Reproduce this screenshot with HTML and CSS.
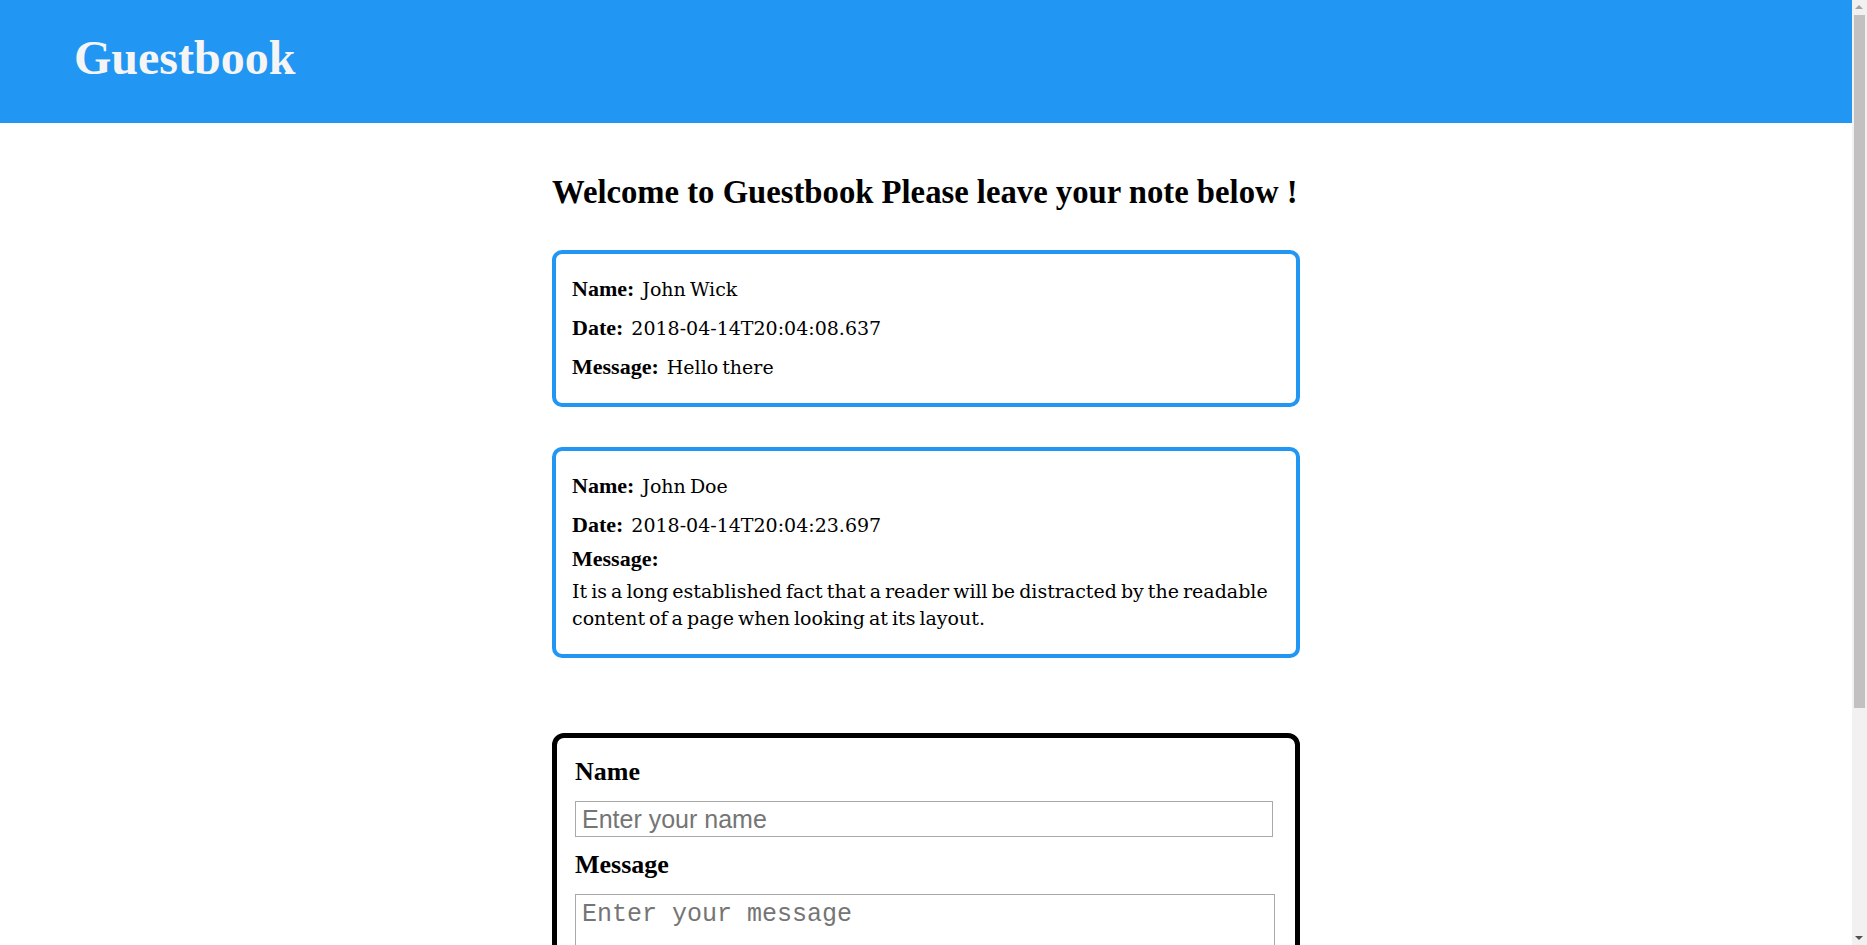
FILE: index.html
```html
<!DOCTYPE html>
<html lang="en">
<head>
<meta charset="utf-8">
<title>Guestbook</title>
<link rel="stylesheet" href="styles.css">
</head>
<body>
<header class="topbar">
  <h1 class="brand">Guestbook</h1>
</header>
<main class="container">
  <h2 class="welcome">Welcome to Guestbook Please leave your note below !</h2>
  <section class="notes">
    <article class="note">
      <div class="row"><span class="label">Name:</span><p class="value">John Wick</p></div>
      <div class="row"><span class="label">Date:</span><p class="value">2018-04-14T20:04:08.637</p></div>
      <div class="row"><span class="label">Message:</span><p class="value">Hello there</p></div>
    </article>
    <article class="note">
      <div class="row"><span class="label">Name:</span><p class="value">John Doe</p></div>
      <div class="row"><span class="label">Date:</span><p class="value">2018-04-14T20:04:23.697</p></div>
      <div class="row"><span class="label">Message:</span><p class="value">It is a long established fact that a reader will be distracted by the readable content of a page when looking at its layout.</p></div>
    </article>
  </section>
  <form class="entry-form">
    <label class="field-label" for="name">Name</label>
    <input class="field-input" id="name" type="text" placeholder="Enter your name">
    <label class="field-label" for="message">Message</label>
    <textarea class="field-area" id="message" placeholder="Enter your message"></textarea>
    <button class="submit" type="submit">Submit</button>
  </form>
</main>
<div class="scrollbar" aria-hidden="true">
  <span class="sb-arrow sb-up"></span>
  <span class="sb-thumb"></span>
  <span class="sb-arrow sb-down"></span>
</div>
</body>
</html>
```

FILE: styles.css
```css
html, body {
  margin: 0;
  padding: 0;
  background: #ffffff;
  color: #000000;
}

body {
  font-family: "DejaVu Serif", serif;
  padding-right: 15px;
}

.topbar {
  background: #2196f3;
  height: 123px;
  box-sizing: border-box;
  padding: 30px 0 0 74px;
}

.brand {
  margin: 0;
  font-family: "Liberation Serif", serif;
  font-weight: bold;
  font-size: 48px;
  line-height: 56px;
  color: #f5f5f5;
}

.container {
  width: 748px;
  margin: 0 auto;
  padding-bottom: 74px;
}

.welcome {
  margin: 51px 0 40px;
  font-family: "Liberation Serif", serif;
  font-weight: bold;
  font-size: 32.7px;
  line-height: 36px;
  white-space: nowrap;
}

.notes {
  display: flex;
  flex-direction: column;
  gap: 40px;
}

.note {
  border: 4px solid #2196f3;
  border-radius: 10px;
  padding: 16px;
}

.row {
  display: flex;
  flex-wrap: wrap;
  align-items: baseline;
  column-gap: 8px;
  line-height: 27px;
}

.label {
  font-family: "Liberation Serif", serif;
  font-weight: bold;
  font-size: 22px;
}

.value {
  margin: 6px 0;
  font-family: "DejaVu Serif", serif;
  font-size: 19px;
  word-spacing: -2px;
}

.entry-form {
  margin-top: 75px;
  border: 5px solid #000000;
  border-radius: 12px;
  padding: 19px 20px 20px 18px;
  display: flex;
  flex-direction: column;
  align-items: flex-start;
}

.field-label {
  font-family: "Liberation Serif", serif;
  font-weight: bold;
  font-size: 26px;
  line-height: 30px;
  margin-bottom: 14px;
}

.field-input {
  box-sizing: border-box;
  width: 698px;
  height: 36px;
  margin: 0 0 13px;
  padding: 0 6px;
  border: 1px solid #a9a9a9;
  font-family: "Liberation Sans", sans-serif;
  font-size: 25px;
  color: #000;
}

.field-input::placeholder {
  color: #757575;
}

.field-area {
  box-sizing: border-box;
  width: 700px;
  height: 200px;
  margin: 0 0 14px;
  padding: 5px 6px;
  border: 1px solid #a9a9a9;
  font-family: "Liberation Mono", monospace;
  font-size: 25px;
  resize: vertical;
}

.field-area::placeholder {
  color: #757575;
}

.submit {
  height: 40px;
  padding: 0 20px;
  font-family: "Liberation Serif", serif;
  font-size: 20px;
  background: #2196f3;
  color: #fff;
  border: none;
  border-radius: 4px;
}

/* decorative replica of the page scrollbar seen in the reference */
.scrollbar {
  position: fixed;
  top: 0;
  right: 0;
  width: 15px;
  height: 100vh;
  background: #f1f1f1;
}

.sb-thumb {
  position: absolute;
  left: 2px;
  right: 2px;
  top: 15px;
  height: 693px;
  background: #c1c1c1;
}

.sb-arrow {
  position: absolute;
  left: 3px;
  width: 0;
  height: 0;
  border-left: 4px solid transparent;
  border-right: 4px solid transparent;
}

.sb-up {
  top: 5px;
  border-bottom: 4px solid #a3a3a3;
}

.sb-down {
  bottom: 5px;
  border-top: 4px solid #505050;
}
```
